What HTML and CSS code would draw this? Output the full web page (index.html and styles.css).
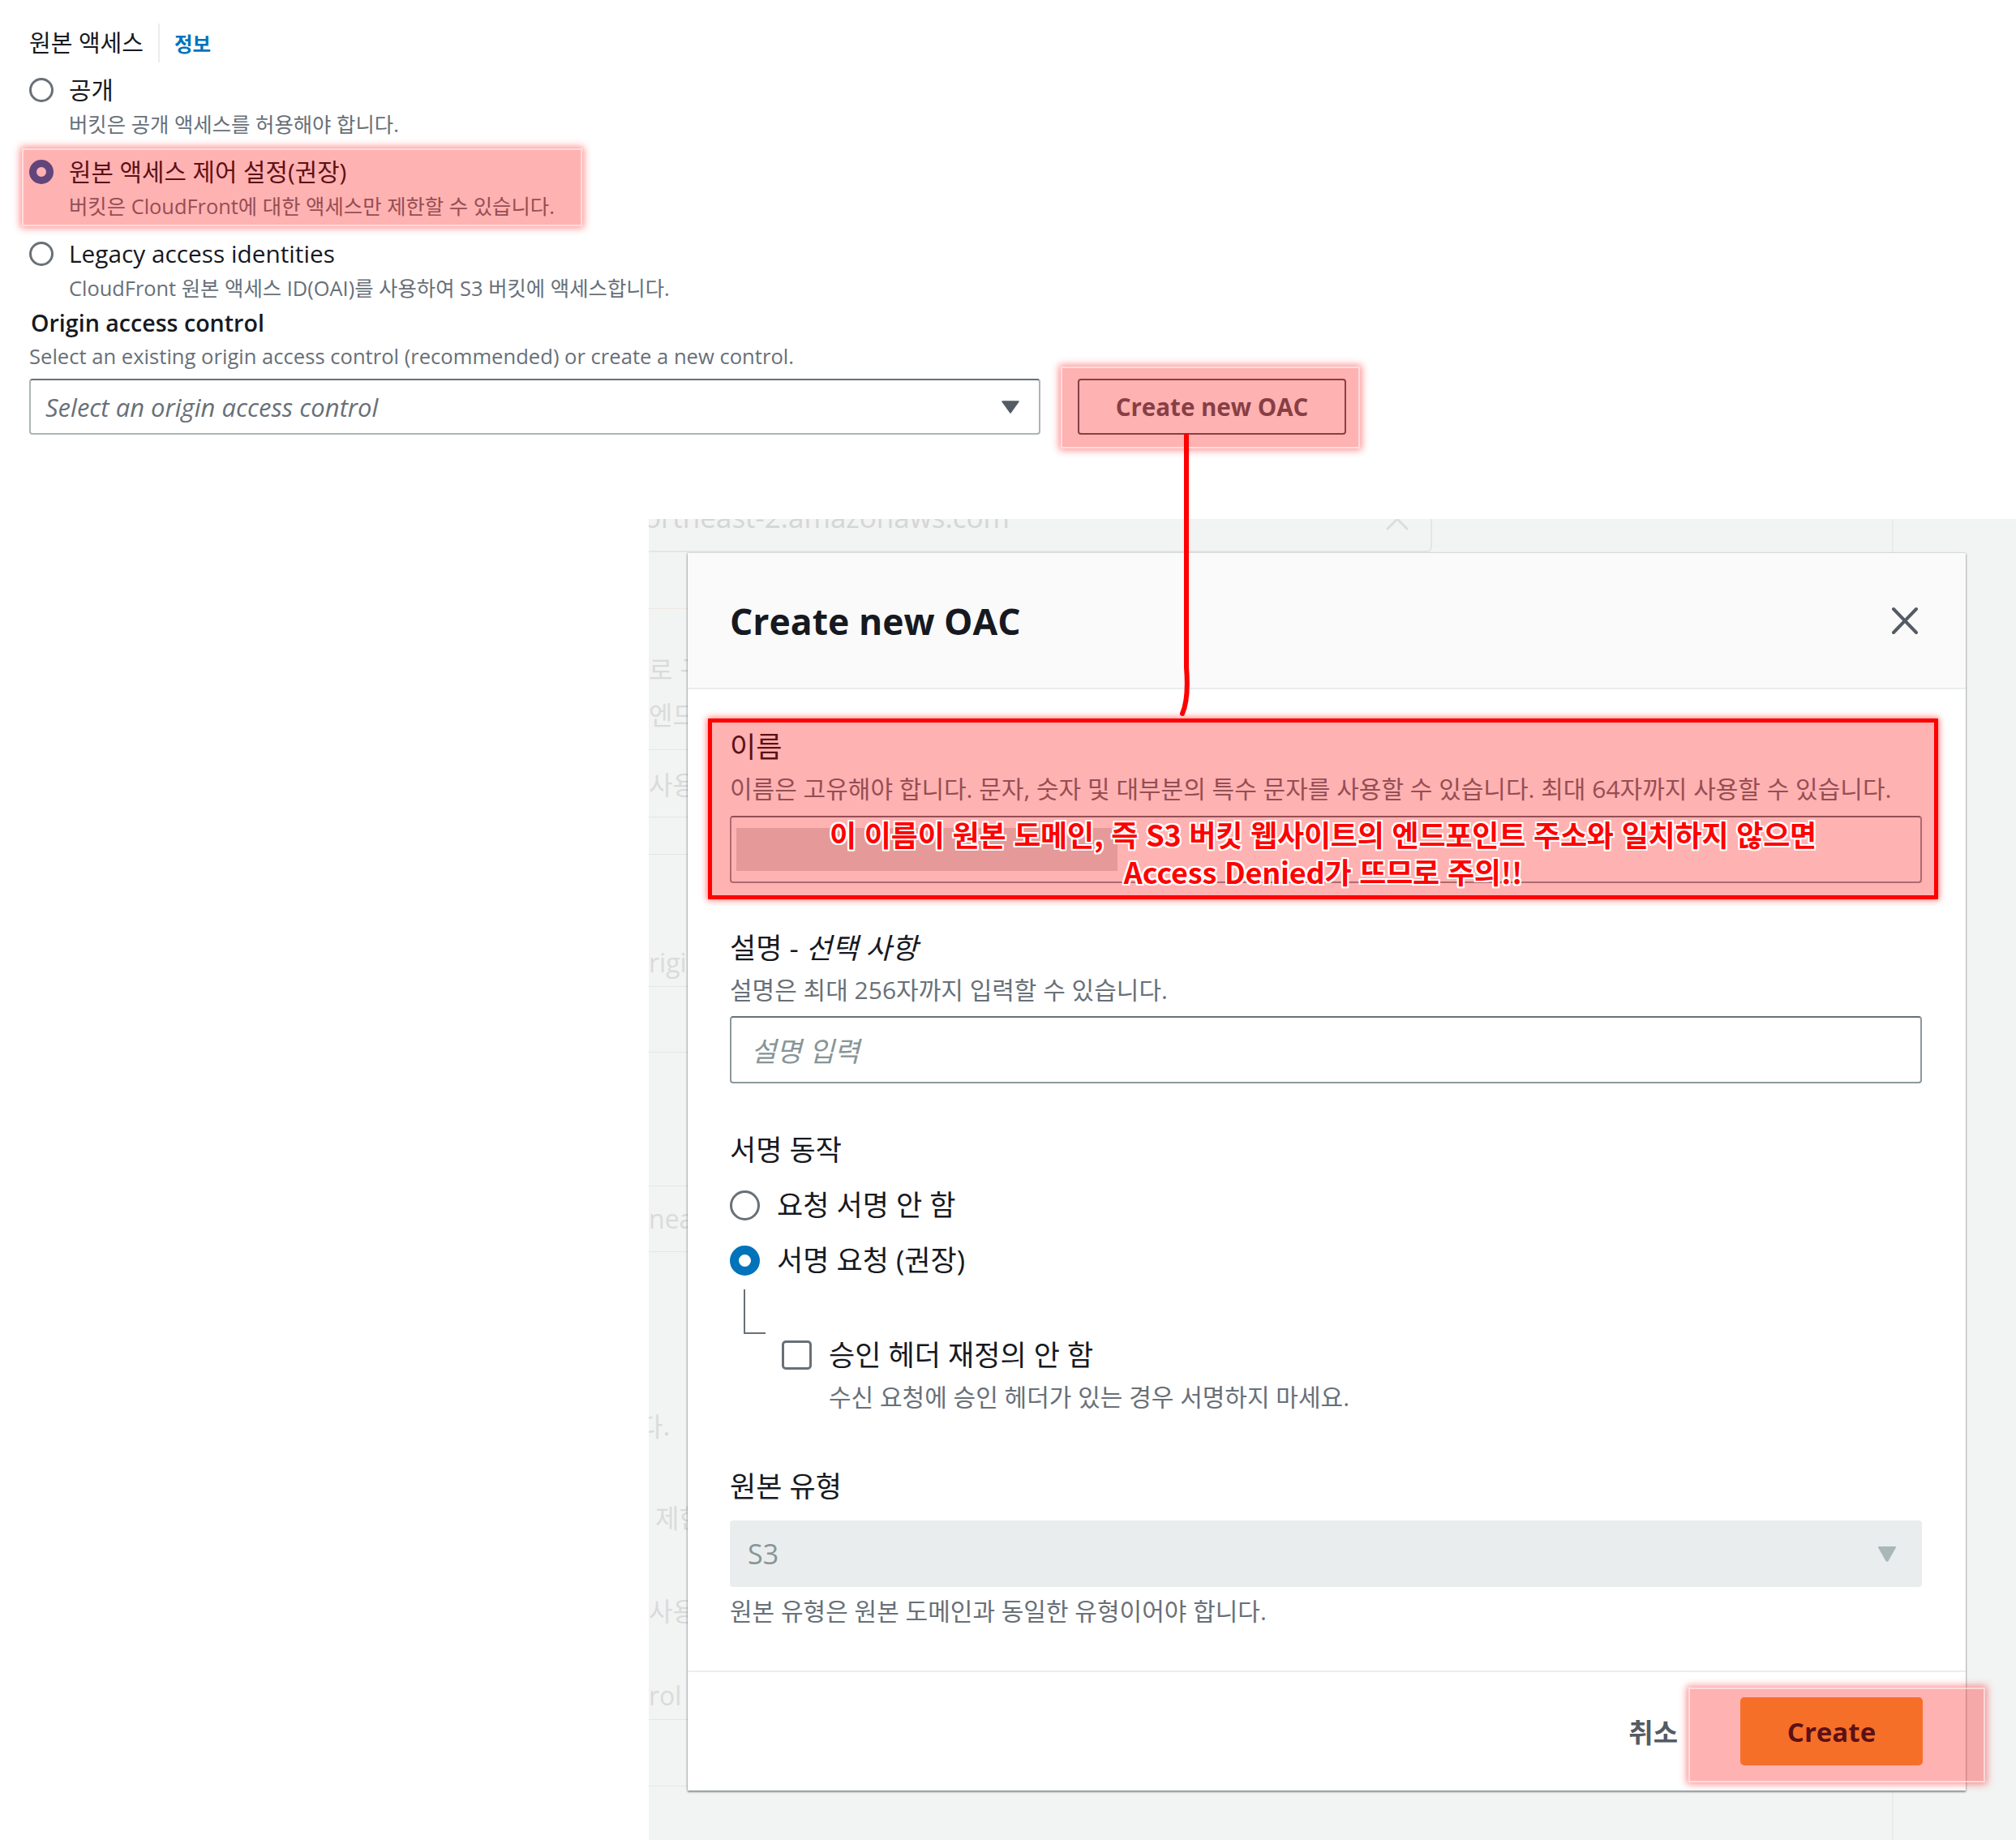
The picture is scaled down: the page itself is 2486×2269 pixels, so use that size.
FILE: index.html
```html
<!DOCTYPE html>
<html lang="ko">
<head>
<meta charset="utf-8">
<title>Create new OAC</title>
<link rel="stylesheet" href="styles.css">
</head>
<body>
<main class="page">
  <section class="origin-access">
    <div class="field-head">
      <span class="head-label">원본 액세스</span>
      <span class="divider"></span>
      <a class="info">정보</a>
    </div>
    <div class="radio-list">
      <div class="radio-item">
        <span class="radio"></span>
        <div>
          <div class="r-label">공개</div>
          <div class="r-desc">버킷은 공개 액세스를 허용해야 합니다.</div>
        </div>
      </div>
      <div class="radio-item">
        <span class="radio checked"></span>
        <div>
          <div class="r-label">원본 액세스 제어 설정(권장)</div>
          <div class="r-desc">버킷은 CloudFront에 대한 액세스만 제한할 수 있습니다.</div>
        </div>
        <span class="hl hl-radio"></span>
      </div>
      <div class="radio-item">
        <span class="radio"></span>
        <div>
          <div class="r-label">Legacy access identities</div>
          <div class="r-desc">CloudFront 원본 액세스 ID(OAI)를 사용하여 S3 버킷에 액세스합니다.</div>
        </div>
      </div>
    </div>
    <div class="oac-field">
      <div class="f-label">Origin access control</div>
      <div class="f-desc">Select an existing origin access control (recommended) or create a new control.</div>
      <div class="oac-row">
        <div class="select">
          <span class="placeholder">Select an origin access control</span>
          <svg class="caret" viewBox="0 0 22 16"><path d="M1 1 H21 L11 15 Z" fill="#545b64" stroke="#545b64" stroke-width="1.5" stroke-linejoin="round"/></svg>
        </div>
        <div class="btn-wrap">
          <button class="btn-normal" type="button">Create new OAC</button>
          <span class="hl hl-btn"></span>
        </div>
      </div>
    </div>
  </section>

  <section class="backdrop">
    <div class="bg-left">
      <div class="bg-band">
        <span class="band-text">ortheast-2.amazonaws.com</span>
        <svg class="band-x" viewBox="0 0 30 30"><path d="M3 3 L27 27 M27 3 L3 27" stroke="#dcdede" stroke-width="3" stroke-linecap="round"/></svg>
      </div>
      <div class="bg-row h69 line warm"></div>
      <div class="bg-row h45"></div>
      <div class="bg-row h56">로 구성</div>
      <div class="bg-row h56">엔드포인트</div>
      <div class="bg-row h16 line"></div>
      <div class="bg-row h82 line">사용하여</div>
      <div class="bg-row h45 line"></div>
      <div class="bg-row h104"></div>
      <div class="bg-row h58 line latin">rigin</div>
      <div class="bg-row h80 line"></div>
      <div class="bg-row h164 line"></div>
      <div class="bg-row h80 line latin">neast</div>
      <div class="bg-row h185"></div>
      <div class="bg-row h56 cut">다.</div>
      <div class="bg-row h57"></div>
      <div class="bg-row h56 indent">제한</div>
      <div class="bg-row h58"></div>
      <div class="bg-row h56">사용</div>
      <div class="bg-row h49"></div>
      <div class="bg-row h58 line latin">rol (</div>
      <div class="bg-row h81 line"></div>
    </div>
    <div class="bg-right"></div>

    <div class="modal" role="dialog" aria-label="Create new OAC">
      <div class="modal-header">
        <h2 class="modal-title">Create new OAC</h2>
        <svg class="close" viewBox="0 0 34 35"><path d="M3 3 L31 32 M31 3 L3 32" stroke="#545b64" stroke-width="4" stroke-linecap="round"/></svg>
      </div>
      <div class="modal-body">
        <div class="m-field name-field">
          <div class="m-label">이름</div>
          <div class="m-desc">이름은 고유해야 합니다. 문자, 숫자 및 대부분의 특수 문자를 사용할 수 있습니다. 최대 64자까지 사용할 수 있습니다.</div>
          <div class="m-input"><span class="redacted"></span></div>
          <div class="hl-name">
            <p class="warn">이 이름이 원본 도메인, 즉 S3 버킷 웹사이트의 엔드포인트 주소와 일치하지 않으면<br>Access Denied가 뜨므로 주의!!</p>
          </div>
        </div>

        <div class="m-field gap54">
          <div class="m-label">설명 - <em>선택 사항</em></div>
          <div class="m-desc">설명은 최대 256자까지 입력할 수 있습니다.</div>
          <div class="m-input desc-input"><span class="m-placeholder">설명 입력</span></div>
        </div>

        <div class="m-field gap56">
          <div class="m-label">서명 동작</div>
          <div class="m-radios">
            <div class="m-radio"><span class="m-dot"></span><span class="m-rtext">요청 서명 안 함</span></div>
            <div class="m-radio"><span class="m-dot on"></span><span class="m-rtext">서명 요청 (권장)</span></div>
          </div>
          <div class="tree"></div>
          <div class="m-check">
            <span class="box"></span>
            <div>
              <div class="m-rtext">승인 헤더 재정의 안 함</div>
              <div class="m-desc">수신 요청에 승인 헤더가 있는 경우 서명하지 마세요.</div>
            </div>
          </div>
        </div>

        <div class="m-field gap58">
          <div class="m-label">원본 유형</div>
          <div class="m-select">
            <span>S3</span>
            <svg class="caret2" viewBox="0 0 24 20"><path d="M2 2 H22 L13 18 Q12 19.5 11 18 Z" fill="#aab7b8" stroke="#aab7b8" stroke-width="2" stroke-linejoin="round"/></svg>
          </div>
          <div class="m-desc after-select">원본 유형은 원본 도메인과 동일한 유형이어야 합니다.</div>
        </div>
      </div>
      <div class="modal-footer">
        <button class="btn-link" type="button">취소</button>
        <div class="btn-wrap">
          <button class="btn-primary" type="button">Create</button>
          <span class="hl hl-create"></span>
        </div>
      </div>
    </div>
  </section>

  <svg class="annot-line" viewBox="0 0 2486 2269"><path d="M1463 537 L1463 823 Q1466 862 1458 880" fill="none" stroke="#ff0000" stroke-width="6" stroke-linecap="round"/></svg>
</main>
</body>
</html>
```

FILE: styles.css
```css
* { box-sizing: border-box; }
html, body { margin: 0; padding: 0; }
body {
  width: 2486px;
  height: 2269px;
  overflow: hidden;
  background: #ffffff;
  font-family: "Open Sans", "Noto Sans CJK KR", sans-serif;
  color: #16191f;
}
.page { position: relative; width: 2486px; height: 2269px; }

/* ---------- top form ---------- */
.origin-access { height: 640px; padding: 29px 0 0 36px; }
.field-head { display: flex; align-items: center; height: 48px; }
.head-label { font-size: 29px; line-height: 48px; }
.divider { width: 2px; height: 48px; background: #eaeded; margin: 0 18px; }
.info { font-size: 24.5px; font-weight: 700; color: #0073bb; }

.radio-list { margin-top: 13px; display: flex; flex-direction: column; gap: 17px; }
.radio-item { position: relative; display: grid; grid-template-columns: 30px 1fr; column-gap: 19px; }
.radio { width: 30px; height: 30px; border-radius: 50%; border: 3px solid #687078; margin-top: 6px; background: #fff; }
.radio.checked { border: 9px solid #1d63b0; }
.r-label { font-size: 29.8px; line-height: 42px; }
.r-desc { font-size: 25.4px; line-height: 42px; color: #687078; }

.oac-field { margin-top: 1px; }
.f-label { font-size: 28.6px; font-weight: 600; line-height: 42px; padding-left: 2px; }
.f-desc { font-size: 25.6px; line-height: 42px; color: #687078; }
.oac-row { margin-top: 6px; display: flex; gap: 46px; }
.select {
  width: 1247px; height: 69px;
  border: 2px solid #aab7b8; border-top-color: #687078; border-radius: 4px;
  display: flex; align-items: center; justify-content: space-between;
  padding: 0 24px 0 18px;
}
.placeholder { font-size: 31px; font-style: italic; color: #687078; }
.caret { width: 22px; height: 16px; }

.btn-wrap { position: relative; }
.btn-normal {
  width: 331px; height: 69px;
  border: 2px solid #545b64; border-radius: 4px; background: #fff;
  color: #545b64; font-family: inherit; font-size: 29.5px; font-weight: 700;
}

/* annotation highlights */
.hl {
  position: absolute; pointer-events: none;
  background: rgba(255, 0, 0, 0.3);
  border: 2px solid rgba(255, 255, 255, 0.55);
  box-shadow: 0 0 9px 2px rgba(255, 0, 0, 0.45);
}
.hl-radio { left: -9px; top: -8px; width: 691px; height: 96px; }
.hl-btn { left: -21px; top: -15px; right: -17px; bottom: -17px; }
.hl-create { left: -64px; top: -12px; right: -77px; bottom: -21px; }

/* ---------- faded backdrop ---------- */
.backdrop {
  position: relative;
  margin-left: 800px;
  height: 1629px;
  background: #f2f3f3;
  display: grid;
  grid-template-columns: 1533px 1fr;
}
.bg-left { overflow: hidden; }
.bg-right { border-left: 2px solid #eaebeb; }
.bg-band {
  width: 966px; height: 41px;
  border-right: 2px solid #e4e5e5; border-bottom: 2px solid #e4e5e5;
  border-bottom-right-radius: 6px;
  overflow: hidden;
  display: flex; justify-content: space-between; align-items: flex-start;
  padding-right: 26px;
}
.band-text { font-size: 35px; line-height: 40px; margin-top: -22px; margin-left: -6px; color: #d4d6d6; }
.band-x { width: 30px; height: 30px; margin-top: -15px; }

.bg-row { font-family: "Noto Sans CJK KR", sans-serif; font-size: 32px; color: #d9dbdb; white-space: nowrap; }
.bg-row.latin { font-family: "Open Sans", sans-serif; }
.bg-row.line { border-bottom: 1px solid #e4e5e5; }
.bg-row.warm { border-bottom-color: #efe7e1; }
.bg-row.cut { text-indent: -12px; }
.bg-row.indent { text-indent: 8px; }
.h16 { height: 17px; line-height: 16px; }
.h45 { height: 45px; line-height: 45px; }
.bg-row.line.h45 { height: 46px; }
.h49 { height: 49px; }
.h56 { height: 56px; line-height: 56px; }
.h57 { height: 57px; }
.h58 { height: 59px; line-height: 58px; }
.h69 { height: 70px; }
.h80 { height: 81px; line-height: 80px; }
.h81 { height: 82px; }
.h82 { height: 83px; line-height: 82px; }
.h104 { height: 104px; }
.h164 { height: 165px; }
.h185 { height: 185px; }

/* ---------- modal ---------- */
.modal {
  position: absolute; left: 48px; top: 42px; width: 1576px;
  background: #ffffff;
  box-shadow: 0 2px 2px rgba(0, 28, 36, 0.4), 1px 0 2px rgba(0, 28, 36, 0.15), -1px 0 2px rgba(0, 28, 36, 0.2);
}
.modal-header {
  height: 168px; background: #fafafa; border-bottom: 2px solid #eaeded;
  display: flex; align-items: center; justify-content: space-between;
  padding: 0 58px 0 52px;
}
.modal-title { margin: 0; font-size: 44.5px; font-weight: 700; color: #16191f; }
.close { width: 34px; height: 35px; }

.modal-body { padding: 45px 54px 47px 52px; }
.m-field { position: relative; }
.gap54 { margin-top: 54px; }
.gap56 { margin-top: 56px; }
.gap58 { margin-top: 58px; }
.m-label { font-size: 35px; line-height: 52px; }
.m-label em { font-style: italic; }
.m-desc { font-size: 30px; line-height: 52px; color: #687078; }
.m-input {
  margin-top: 7px; height: 83px;
  border: 2px solid #8d989f; border-top-color: #687078; border-radius: 4px;
  display: flex; align-items: center; padding-left: 6px;
}
.desc-input { margin-top: 6px; padding-left: 24px; }
.redacted { width: 470px; height: 53px; background: #dcdcdc; }
.m-placeholder { font-size: 34px; font-style: italic; color: #879596; }

.hl-name {
  position: absolute; left: -27px; right: -20px; top: -9px; bottom: -20px;
  border: 5px solid #ff0000;
  background: rgba(255, 0, 0, 0.3);
  box-shadow: 0 0 8px 1px rgba(255, 0, 0, 0.55);
  display: flex; flex-direction: column; justify-content: flex-end; align-items: center;
  padding-bottom: 7px;
}
.warn {
  margin: 0; text-align: center;
  font-family: "Noto Sans CJK KR", sans-serif;
  font-size: 36px; font-weight: 700; line-height: 46px; letter-spacing: -0.2px;
  color: #ff0000;
  text-shadow: 2px 0 #fff, -2px 0 #fff, 0 2px #fff, 0 -2px #fff,
               2px 2px #fff, -2px -2px #fff, 2px -2px #fff, -2px 2px #fff;
}

.m-radios { margin-top: 16px; display: flex; flex-direction: column; gap: 16px; }
.m-radio { display: flex; align-items: center; gap: 21px; height: 52px; }
.m-dot { width: 37px; height: 37px; border-radius: 50%; border: 3px solid #687078; background: #fff; flex: none; }
.m-dot.on { border: 11px solid #0073bb; }
.m-rtext { font-size: 35px; line-height: 52px; }
.tree {
  margin: 10px 0 0 17px; width: 27px; height: 55px;
  border-left: 2px solid #687078; border-bottom: 2px solid #687078;
}
.m-check { display: grid; grid-template-columns: 37px 1fr; column-gap: 21px; margin-left: 64px; }
.box { width: 37px; height: 36px; border: 3px solid #687078; border-radius: 5px; margin-top: 8px; background: #fff; }

.m-select {
  margin-top: 16px; height: 82px;
  background: #eaeded; border-radius: 4px;
  display: flex; align-items: center; justify-content: space-between;
  padding: 0 31px 0 22px;
  font-size: 34px; color: #879596;
}
.caret2 { width: 24px; height: 20px; }
.after-select { margin-top: 4px; }

.modal-footer {
  border-top: 2px solid #eaeded;
  height: 148px;
  display: flex; justify-content: flex-end; align-items: center;
  padding-right: 53px; gap: 77px;
}
.btn-link {
  border: none; background: none; padding: 0;
  font-family: inherit; font-size: 33px; font-weight: 700; color: #545b64;
}
.btn-primary {
  width: 225px; height: 84px; border: none; border-radius: 5px;
  background: #f2a03c; color: #16191f;
  font-family: inherit; font-size: 33px; font-weight: 700;
}

/* connector line */
.annot-line { position: absolute; left: 0; top: 0; width: 2486px; height: 2269px; pointer-events: none; }
```
